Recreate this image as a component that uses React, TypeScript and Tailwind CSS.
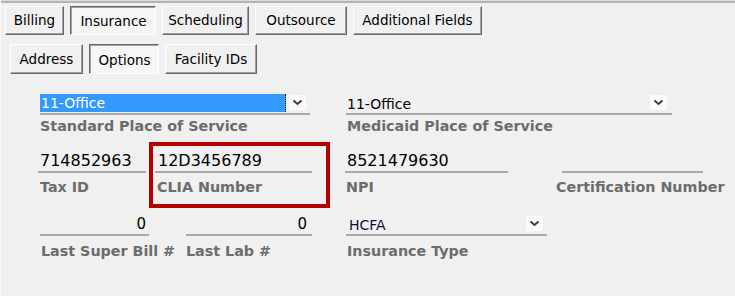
import React from "react";

function Tab({ label, w, pressed }: { label: string; w: string; pressed?: boolean }) {
  return (
    <div
      className={
        "h-full flex items-center justify-center text-[13.5px] text-black whitespace-nowrap " +
        w +
        (pressed
          ? " bg-[#f6f6f6] border-t border-l border-b border-r border-t-[#696969] border-l-[#696969] border-b-white border-r-white shadow-[inset_1px_1px_0_#a0a0a0]"
          : " bg-[#f0f0f0] border-t border-l border-b border-r border-t-white border-l-white border-b-[#696969] border-r-[#696969] shadow-[inset_-1px_-1px_0_#a0a0a0]")
      }
    >
      <span className={pressed ? "pt-[2px] pl-[1px]" : ""}>{label}</span>
    </div>
  );
}

function Chevron() {
  return (
    <div className="w-[17px] h-[15px] bg-[#fbfbfb] flex items-center justify-center">
      <svg width="11" height="7" viewBox="0 0 11 7">
        <polyline points="1.5,1.5 5.5,5 9.5,1.5" fill="none" stroke="#3c3c3c" strokeWidth="2" />
      </svg>
    </div>
  );
}

function Label({ children, cls }: { children: React.ReactNode; cls?: string }) {
  return (
    <div
      className={
        "font-['DejaVu_Sans'] font-bold text-[14.3px] leading-[17px] text-[#6c6c6c] whitespace-nowrap " + (cls ?? "")
      }
    >
      {children}
    </div>
  );
}

export default function App() {
  return (
    <div className="w-[735px] h-[296px] bg-[#f0f0f0] border-l border-l-[#fafafa] relative overflow-hidden font-['DejaVu_Sans']">
      <div className="h-[1px] bg-[#dcdcdc]" />
      <div className="h-[2px] bg-[#b4b4b4]" />

      {/* Row 1 tabs */}
      <div className="mt-[3px] h-[29px] flex gap-[6px] pl-[4px]">
        <Tab label="Billing" w="w-[59px]" />
        <Tab label="Insurance" w="w-[86px]" pressed />
        <Tab label="Scheduling" w="w-[87px]" />
        <Tab label="Outsource" w="w-[92px]" />
        <Tab label="Additional Fields" w="w-[129px]" />
      </div>

      {/* Row 2 tabs */}
      <div className="mt-[9px] h-[30px] flex gap-[6px] pl-[9px]">
        <Tab label="Address" w="w-[73px]" />
        <Tab label="Options" w="w-[70px]" pressed />
        <Tab label="Facility IDs" w="w-[92px]" />
      </div>

      {/* Row A: combos */}
      <div className="mt-[20px] flex pl-[39px]">
        <div className="w-[270px]">
          <div className="h-[19px] flex items-start">
            <div className="w-[246px] h-[18px] bg-[#3399ff] border-r border-dotted border-r-[#222] text-white text-[14px] leading-[18px] pl-[1px]">
              11-Office
            </div>
            <div className="ml-[3px] mt-[1px]">
              <Chevron />
            </div>
          </div>
          <div className="h-[2px] bg-[#a8a8a8]" />
          <Label cls="mt-[3px]">Standard Place of Service</Label>
        </div>
        <div className="ml-[36px] w-[326px]">
          <div className="h-[19px] flex items-start justify-between">
            <div className="text-[14px] leading-[19px] text-black pl-[1px] pt-[1px]">11-Office</div>
            <div className="mr-[5px] mt-[1px]">
              <Chevron />
            </div>
          </div>
          <div className="h-[2px] bg-[#a8a8a8]" />
          <Label cls="mt-[3px] pl-[1px]">Medicaid Place of Service</Label>
        </div>
      </div>

      {/* Row B */}
      <div className="mt-[15px] flex pl-[37px]">
        <div className="w-[108px]">
          <div className="h-[21px] text-[16px] leading-[19px] text-black pl-[2px] pt-[1px]">714852963</div>
          <div className="h-[2px] bg-[#a8a8a8]" />
          <Label cls="mt-[6px] pl-[2px]">Tax ID</Label>
        </div>
        <div className="ml-[9px] w-[157px]">
          <div className="h-[21px] text-[16px] leading-[19px] text-black pl-[3px] pt-[1px]">12D3456789</div>
          <div className="h-[2px] bg-[#a8a8a8]" />
          <Label cls="mt-[6px] pl-[2px]">CLIA Number</Label>
        </div>
        <div className="ml-[33px] w-[163px]">
          <div className="h-[21px] text-[16px] leading-[19px] text-black pl-[2px] pt-[1px]">8521479630</div>
          <div className="h-[2px] bg-[#a8a8a8]" />
          <Label cls="mt-[6px] pl-[1px]">NPI</Label>
        </div>
        <div className="ml-[54px] w-[141px]">
          <div className="h-[21px]" />
          <div className="h-[2px] bg-[#a8a8a8]" />
          <Label cls="mt-[6px] -ml-[6px]">Certification Number</Label>
        </div>
      </div>

      {/* Row C */}
      <div className="mt-[17px] flex pl-[39px]">
        <div className="w-[109px]">
          <div className="h-[21px] text-[15px] leading-[18px] text-black text-right pr-[3px] pt-[2px]">0</div>
          <div className="h-[2px] bg-[#a8a8a8]" />
          <Label cls="mt-[7px] pl-[1px]">Last Super Bill #</Label>
        </div>
        <div className="ml-[37px] w-[126px]">
          <div className="h-[21px] text-[15px] leading-[18px] text-black text-right pr-[5px] pt-[2px]">0</div>
          <div className="h-[2px] bg-[#a8a8a8]" />
          <Label cls="mt-[7px]">Last Lab #</Label>
        </div>
        <div className="ml-[34px] w-[201px]">
          <div className="h-[21px] flex items-start justify-between">
            <div className="text-[14px] leading-[18px] text-[#10103a] pl-[3px] pt-[3px]">HCFA</div>
            <div className="mr-[4px] mt-[3px]">
              <Chevron />
            </div>
          </div>
          <div className="h-[2px] bg-[#a8a8a8]" />
          <Label cls="mt-[7px] pl-[1px]">Insurance Type</Label>
        </div>
      </div>

      {/* Highlight annotation */}
      <div className="absolute left-[148px] top-[142px] w-[181px] h-[66px] border-4 border-[#b40000]" />
    </div>
  );
}
